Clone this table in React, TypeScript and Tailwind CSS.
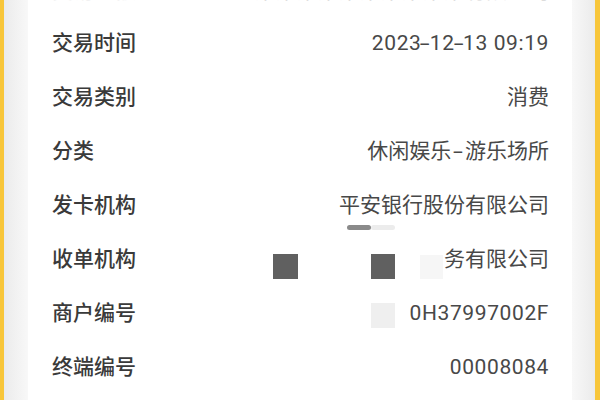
import React from "react";

const rows: { label: string; value: string; num?: boolean }[] = [
  { label: "交易金额", value: "某某某某某某某某某某有限公司" },
  { label: "交易时间", value: "2023-12-13 09:19", num: true },
  { label: "交易类别", value: "消费" },
  { label: "分类", value: "休闲娱乐-游乐场所" },
  { label: "发卡机构", value: "平安银行股份有限公司" },
  { label: "收单机构", value: "务有限公司" },
  { label: "商户编号", value: "0H37997002F", num: true },
  { label: "终端编号", value: "00008084", num: true },
];

// hyphens in the reference font are longer than in Roboto
function Value({ text, num }: { text: string; num?: boolean }) {
  const parts = text.split("-");
  return (
    <>
      {parts.map((p, i) => (
        <React.Fragment key={i}>
          {i > 0 && (
            <span className={`inline-block scale-x-[1.7] ${num ? "mx-[1px]" : "mx-[4px]"}`}>-</span>
          )}
          {p}
        </React.Fragment>
      ))}
    </>
  );
}

export default function App() {
  return (
    <div
      className="flex h-[400px] w-[600px] overflow-hidden bg-[#f8c63a]"
      style={{ fontFamily: "Roboto, 'Noto Sans CJK SC', sans-serif" }}
    >
      {/* left edge */}
      <div className="ml-[4px] w-[24px] bg-gradient-to-r from-[#ebebeb] to-[#f8f8f8]" />

      {/* card */}
      <div className="relative flex-1 bg-white">
        <div className="-mt-[37px] flex flex-col pl-[24px] pr-[23px]">
          {rows.map((r, i) => (
            <div
              key={r.label}
              className={`flex h-[54px] items-center justify-between ${i === 0 ? "pt-[4px]" : ""}`}
            >
              <span className={`text-[21px] font-medium ${i === 0 ? "text-[#ececec]" : "text-[#3a3a3a]"}`}>
                {r.label}
              </span>
              <span
                className={`text-[21px] ${i === 0 ? "text-[#d6d6d6]" : "text-[#484848]"} ${
                  r.num ? "tracking-[0.6px]" : ""
                }`}
              >
                <Value text={r.value} num={r.num} />
              </span>
            </div>
          ))}
        </div>

        {/* redaction marks */}
        <div className="absolute left-[319px] top-[225px] h-[5px] w-[24px] rounded-full bg-[#8a8a8a]" />
        <div className="absolute left-[343px] top-[225px] h-[5px] w-[24px] rounded-full bg-[#ececec]" />
        <div className="absolute left-[245px] top-[254px] h-[25px] w-[25px] bg-[#606060]" />
        <div className="absolute left-[343px] top-[254px] h-[25px] w-[24px] bg-[#606060]" />
        <div className="absolute left-[392px] top-[255px] h-[24px] w-[23px] bg-[#f6f6f6]" />
        <div className="absolute left-[343px] top-[303px] h-[25px] w-[24px] bg-[#efefef]" />
      </div>

      {/* right edge */}
      <div className="mr-[5px] w-[23px] bg-gradient-to-r from-[#f8f8f8] to-[#ebebeb]" />
    </div>
  );
}
